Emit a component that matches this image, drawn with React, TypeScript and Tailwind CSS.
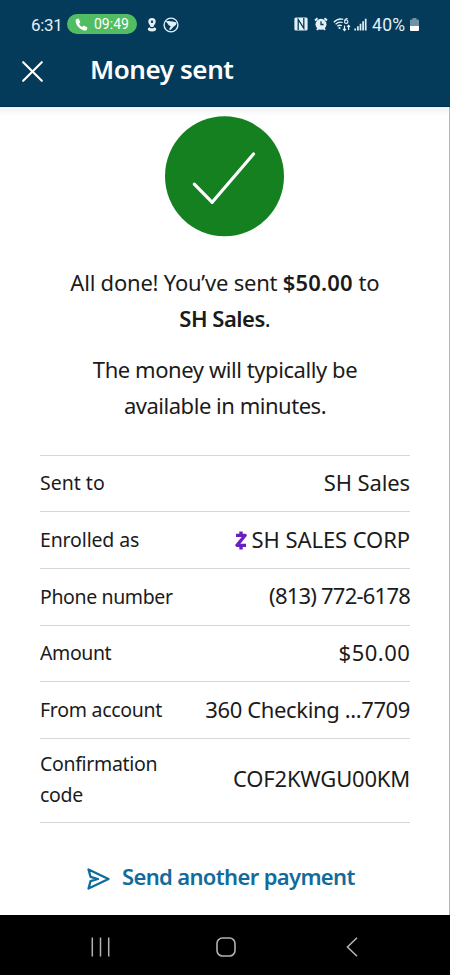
import type { ReactNode } from "react";

function StatusBar() {
  return (
    <div className="flex h-[48px] items-center pl-[31px] pr-[31px] font-[Roboto,sans-serif] text-[#e4f0f8]">
      <span className="w-[36px] whitespace-nowrap pt-px text-[17px] leading-5 tracking-[-0.3px]">6:31</span>
      <span className="flex h-5 w-[70px] items-center rounded-full bg-[#51bd63] pl-2 text-white">
        <svg className="mr-[6px] h-[13px] w-[13px] shrink-0" viewBox="0 0 24 24" fill="currentColor">
          <path d="M2 2.5 6.5 1 10 8 7.500 10.500Q9.500 14.500 13.500 16.500L16 14 23 17.500 21.500 22Q20 24 15 22.500 4 18.500 1.500 8 .5 4 2 2.500Z" />
        </svg>
        <span className="text-[14px] leading-5">09:49</span>
      </span>
      <svg className="ml-[10px] mt-px h-[14px] w-[10px]" viewBox="0 0 10 14">
        <path d="M5 0a3.700 3.700 0 0 1 3.700 3.700C8.700 6 6.600 7 6.300 9H3.700C3.400 7 1.300 6 1.300 3.700A3.700 3.700 0 0 1 5 0Z" fill="currentColor" />
        <circle cx="5" cy="3.700" r="1.200" fill="#043b5a" />
        <path d="M2.500 9.200 .8 10.500Q.5 13.500 5 13.500T9.200 10.500L7.500 9.200 6.300 10.300H3.700Z" fill="currentColor" />
      </svg>
      <svg className="ml-[6px] mt-px h-[16px] w-[16px]" viewBox="0 0 16 16">
        <circle cx="8" cy="8" r="6.900" fill="none" stroke="currentColor" strokeWidth="1.400" />
        <path d="M2.500 4.200Q8 3.400 13.800 5.500 13.500 8.500 10.500 9.800L7.600 13 6 12.500 7.800 8.900Q5.500 9.200 4.800 6.800Z" fill="currentColor" />
      </svg>
      <div className="ml-auto flex items-center">
        <svg className="h-[14px] w-[14px]" viewBox="0 0 14 14">
          <rect x=".4" y=".4" width="13.200" height="13.200" rx="1.500" fill="currentColor" />
          <path d="M4.200 13V2.500L9.800 11.300V1M4.200 5.500V13M9.800 8.500V1" fill="none" stroke="#043b5a" strokeWidth="1.300" />
        </svg>
        <svg className="ml-[6px] h-[14px] w-[14px]" viewBox="0 0 14 14">
          <path d="M1 3.500 3.500 1.200M13 3.500 10.500 1.200M3 13l1.500-2M11 13 9.500 11" stroke="currentColor" strokeWidth="1.900" />
          <circle cx="7" cy="7.300" r="5.500" fill="currentColor" />
          <path d="M7 4.300v3.200h2.600" fill="none" stroke="#043b5a" strokeWidth="1.300" />
        </svg>
        <svg className="ml-[5px] h-[15px] w-[18px]" viewBox="0 0 18 15">
          <path d="M.8 5.300Q5 .8 10.200 2.400M2.600 7.300Q6 4.100 9.700 5.500M4.300 9.200Q6.600 7.500 8.800 8.800" fill="none" stroke="currentColor" strokeWidth="1.300" />
          <circle cx="6.500" cy="11" r="1.100" fill="currentColor" />
          <path d="M14.600 1.700Q11.500 1.500 11.500 4.800a1.700 1.700 0 1 0 1.700-1.800q-1.500 0-1.700 1.600" fill="none" stroke="currentColor" strokeWidth="1.200" />
          <path d="M11.500 8.500v5M10 11.900l1.500 1.600 1.500-1.600M15.600 13V8.300M14.100 9.900l1.500-1.600 1.500 1.600" fill="none" stroke="currentColor" strokeWidth="1.200" />
        </svg>
        <svg className="ml-[3px] h-[13px] w-[13px]" viewBox="0 0 13 13">
          <path d="M1.200 10.500v2M3.900 8.200v4.300M6.500 5.800v6.700M9.100 3.300v9.200M11.700 .8v11.700" stroke="currentColor" strokeWidth="1.700" />
        </svg>
        <span className="ml-[5px] w-[37px] whitespace-nowrap pt-px text-[17.5px] leading-5 tracking-[0.3px]">40%</span>
        <svg className="ml-px h-[13px] w-[9px]" viewBox="0 0 9 13">
          <path d="M2.500 0h4v1.500H8q1 0 1 1V8H0V2.500q0-1 1-1h1.500Z" fill="#6f93a9" />
          <path d="M0 8h9v4q0 1-1 1H1q-1 0-1-1Z" fill="#fff" />
        </svg>
      </div>
    </div>
  );
}

function Row({ label, children, tall }: { label: ReactNode; children: ReactNode; tall?: boolean }) {
  return (
    <div
      className={
        "flex items-center justify-between whitespace-nowrap border-b-[1.5px] border-[#d6d6d6] " +
        (tall ? "h-[83.5px] pb-px" : "h-[56.65px]")
      }
    >
      <span className="text-[19.5px] leading-[30.3px]">{label}</span>
      <span className="flex items-center pb-[3px] text-[22px] leading-[30px]">{children}</span>
    </div>
  );
}

function ZelleMark() {
  return (
    <svg className="mr-[5px] mt-[4px] h-[19px] w-[12px]" viewBox="0 0 12 19">
      <path d="M6 .5v4M6 14.500v4" stroke="#6a1fc2" strokeWidth="3.400" />
      <path d="M1 4.300h9.200L2 14.300h9" fill="none" stroke="#6a1fc2" strokeWidth="3.300" strokeLinejoin="round" />
    </svg>
  );
}

export default function App() {
  return (
    <div className="flex h-[975px] w-[450px] flex-col overflow-hidden bg-black font-['Noto_Sans',sans-serif] text-[#1b1b1b]">
      <header className="h-[107px] shrink-0 border-b border-[#032f4a] bg-[#043b5a]">
        <StatusBar />
        <div className="flex items-center pl-[22px]">
          <svg className="mt-[5px] h-[21px] w-[21px]" viewBox="0 0 21 21">
            <path d="M1.200 1.200 19.800 19.800M19.800 1.200 1.200 19.800" stroke="#fff" strokeWidth="2.100" strokeLinecap="round" />
          </svg>
          <h1 className="ml-[47px] whitespace-nowrap text-[26px] font-semibold leading-[42px] tracking-[-0.42px] text-white">Money sent</h1>
        </div>
      </header>
      <main className="h-[808px] shrink-0 border-r border-[#b5b5b5] bg-white pl-[40px] pr-[39px]">
        <div className="-ml-10 -mr-[39px] h-[9px] bg-linear-to-b from-[#eff1f3] to-white" />
        <svg className="mx-auto h-[121px] w-[120px]" viewBox="0 0 120 121">
          <ellipse cx="59.500" cy="60.300" rx="59.500" ry="60" fill="#148020" />
          <path d="M29.300 68.200 47.200 86.300 88.500 38" fill="none" stroke="#fff" strokeWidth="3.200" strokeLinecap="round" strokeLinejoin="round" />
        </svg>
        <div className="mt-[28px] text-center text-[22px] leading-[35.7px]">
          <p className="whitespace-nowrap">
            <span className="tracking-[-0.22px]">All done! You’ve sent </span>
            <b className="font-semibold tracking-[0.15px]">$50.00</b> to
            <br />
            <b className="font-semibold tracking-[-0.5px]">SH Sales</b>.
          </p>
          <p className="mt-4 whitespace-nowrap">
            <span className="tracking-[-0.43px]">The money will typically be</span>
            <br />
            <span className="tracking-[-0.47px]">available in minutes.</span>
          </p>
        </div>
        <div className="mt-[31px] border-t-[1.5px] border-[#d6d6d6]">
          <Row label={<span>Sent to</span>}><span className="tracking-[-0.1px]">SH Sales</span></Row>
          <Row label={<span className="tracking-[-0.15px]">Enrolled as</span>}><ZelleMark /><span className="tracking-[-0.08px]">SH SALES CORP</span></Row>
          <Row label={<span className="tracking-[-0.38px]">Phone number</span>}><span className="tracking-[-0.78px]">(813) 772-6178</span></Row>
          <Row label={<span className="tracking-[-0.4px]">Amount</span>}><span className="-mr-[0.4px] tracking-[0.5px]">$50.00</span></Row>
          <Row label={<span className="tracking-[-0.28px]">From account</span>}><span className="tracking-[-0.38px]">360 Checking ...7709</span></Row>
          <Row tall label={<span className="tracking-[-0.32px]">Confirmation<br />code</span>}><span className="tracking-[-0.2px]">COF2KWGU00KM</span></Row>
        </div>
        <div className="mt-[35px] flex items-center pl-[47px] text-[#126c9b]">
          <svg className="mt-[7px] h-[22px] w-[23px]" viewBox="0 0 23 22" fill="none" stroke="currentColor" strokeWidth="2.300" strokeLinejoin="round">
            <path d="M1.500 1.500 21.500 11 1.500 20.500 3.500 13.200 11 11 3.500 8.800Z" />
          </svg>
          <span className="ml-[12px] whitespace-nowrap text-[22px] font-semibold leading-[36px] tracking-[-0.65px]">Send another payment</span>
        </div>
      </main>
      <nav className="flex h-[60px] shrink-0 items-center pl-[91px] pt-[3px]">
        <svg className="h-[20px] w-[19px]" viewBox="0 0 19 20">
          <path d="M1.300 .5v19M9.500 .5v19M17.700 .5v19" stroke="#b2b2b2" strokeWidth="1.500" />
        </svg>
        <svg className="ml-[106px] h-[20px] w-[20px]" viewBox="0 0 20 20">
          <rect x="1" y="1" width="18" height="18" rx="5.500" fill="none" stroke="#b2b2b2" strokeWidth="1.600" />
        </svg>
        <svg className="ml-[110px] h-[20px] w-[12px]" viewBox="0 0 12 20">
          <path d="M11 .8 1.500 10 11 19.200" fill="none" stroke="#b2b2b2" strokeWidth="1.600" />
        </svg>
      </nav>
    </div>
  );
}
